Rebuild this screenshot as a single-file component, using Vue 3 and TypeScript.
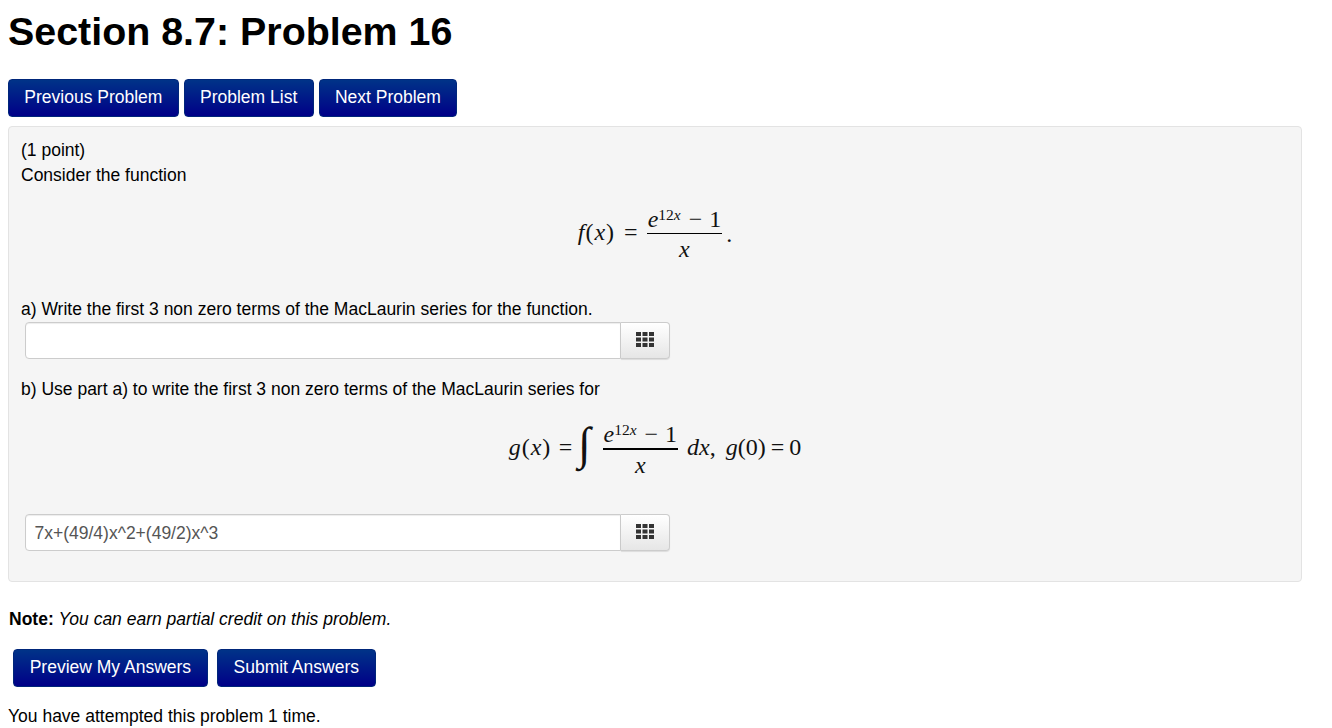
<script setup lang="ts">
const topButtons: string[] = ['Previous Problem', 'Problem List', 'Next Problem']
const bottomButtons: string[] = ['Preview My Answers', 'Submit Answers']
</script>

<template>
  <main class="page">
    <h1 class="title">Section 8.7: Problem 16</h1>
    <nav class="nav">
      <a v-for="b in topButtons" :key="b" class="btn">{{ b }}</a>
    </nav>
    <section class="well">
      <div class="line">(1 point)</div>
      <div class="line">Consider the function</div>
      <div class="math eq1">
        <i>f</i><span class="p">(</span><i>x</i><span class="p">)</span>
        <span class="eq">=</span>
        <span class="frac">
          <span class="num"><i>e</i><sup><span>12</span><i>x</i></sup><span class="minus">−</span><span>1</span></span>
          <span class="den"><i>x</i></span>
        </span>
        <span class="dot">.</span>
      </div>
      <div class="line">a) Write the first 3 non zero terms of the MacLaurin series for the function.</div>
      <div class="group">
        <div class="field"></div>
        <div class="addon">
          <svg width="18" height="15" viewBox="0 0 18 15"><path class="grid" d="M0 0h5v4H0zM6.5 0h5v4h-5zM13 0h5v4h-5zM0 5.5h5v4H0zM6.5 5.5h5v4h-5zM13 5.5h5v4h-5zM0 11h5v4H0zM6.5 11h5v4h-5zM13 11h5v4h-5z"/></svg>
        </div>
      </div>
      <div class="line b">b) Use part a) to write the first 3 non zero terms of the MacLaurin series for</div>
      <div class="math eq2">
        <i>g</i><span class="p">(</span><i>x</i><span class="p">)</span>
        <span class="eq first">=</span>
        <span class="int">∫</span>
        <span class="frac thick">
          <span class="num"><i>e</i><sup><span>12</span><i>x</i></sup><span class="minus">−</span><span>1</span></span>
          <span class="den"><i>x</i></span>
        </span>
        <span class="dx"><i>dx</i>,</span>
        <span class="g0"><i>g</i>(0)</span>
        <span class="eq tight">=</span>
        <span>0</span>
      </div>
      <div class="group">
        <div class="field">7x+(49/4)x^2+(49/2)x^3</div>
        <div class="addon">
          <svg width="18" height="15" viewBox="0 0 18 15"><path class="grid" d="M0 0h5v4H0zM6.5 0h5v4h-5zM13 0h5v4h-5zM0 5.5h5v4H0zM6.5 5.5h5v4h-5zM13 5.5h5v4h-5zM0 11h5v4H0zM6.5 11h5v4h-5zM13 11h5v4h-5z"/></svg>
        </div>
      </div>
    </section>
    <p class="note"><b>Note:</b> <i>You can earn partial credit on this problem.</i></p>
    <div class="actions">
      <a v-for="b in bottomButtons" :key="b" class="btn">{{ b }}</a>
    </div>
    <p class="attempts">You have attempted this problem 1 time.</p>
  </main>
</template>

<style scoped>
.page {
  font-family: "Liberation Sans", Arial, sans-serif;
  font-size: 17.5px;
  line-height: 25px;
  color: #000;
  width: 1294px;
  height: 728px;
  overflow: hidden;
  padding-left: 8px;
}
.title {
  margin: 0;
  padding-top: 7px;
  font-size: 39.4px;
  line-height: 48px;
  font-weight: 700;
}
.nav {
  display: flex;
  gap: 5px;
  margin-top: 24px;
}
.btn {
  display: block;
  height: 38px;
  box-sizing: border-box;
  padding: 0 15.3px;
  line-height: 35px;
  color: #fff;
  border-radius: 4px;
  background: linear-gradient(#038, #008);
  border: 1px solid #00267a;
  white-space: nowrap;
}
.well {
  margin-top: 9px;
  height: 456px;
  box-sizing: border-box;
  padding: 11px 12px 0;
  background: #f5f5f5;
  border: 1px solid #e3e3e3;
  border-radius: 4px;
}
.line { height: 25px; }
.math {
  font-family: "Liberation Serif", "DejaVu Serif", serif;
  font-size: 24px;
  line-height: 24px;
  color: #111;
  display: flex;
  justify-content: center;
  align-items: center;
}
.eq1 { height: 88px; margin-bottom: 21px; }
.p { margin: 0 1px; }
.eq { margin: 0 9px; }
.eq.first { margin: 0 7.5px; }
.eq.tight { margin: 0 5px; }
.frac {
  display: inline-flex;
  flex-direction: column;
  align-items: center;
}
.num {
  display: block;
  padding: 0 1px;
  border-bottom: 1.5px solid #000;
  height: 27px;
  line-height: 26px;
  white-space: nowrap;
}
.num sup {
  font-size: 15.5px;
  line-height: 0;
  position: relative;
  top: -7px;
  vertical-align: baseline;
}
.minus { margin: 0 7px 0 8px; }
.den { display: block; height: 24px; line-height: 30px; }
.dot { margin: 4px 0 0 4px; }
.group {
  display: flex;
  width: 645px;
  height: 37px;
  margin-left: 4px;
}
.field {
  flex: 1;
  box-sizing: border-box;
  background: #fff;
  border: 1px solid #ccc;
  border-radius: 4px 0 0 4px;
  color: #555;
  padding: 0 8.5px;
  line-height: 36px;
  box-shadow: inset 0 1px 1px rgba(0, 0, 0, .075);
}
.addon {
  width: 49px;
  box-sizing: border-box;
  display: flex;
  align-items: center;
  justify-content: center;
  padding-bottom: 2px;
  border: 1px solid #ccc;
  border-left: 0;
  border-radius: 0 4px 4px 0;
  background: linear-gradient(#fff, #e6e6e6);
  box-shadow: 0 1px 1px rgba(0, 0, 0, .1);
}
.grid { fill: #333; }
.b { margin-top: 18px; }
.eq2 { height: 88px; margin: 1px 0 23px; }
.int {
  font-size: 46px;
  line-height: 56px;
  margin: 0 12px 6px -2px;
}
.thick .num { border-bottom-width: 2px; }
.dx { margin: 0 10px 0 9px; }
.note { margin: 25px 0 0; height: 25px; padding-left: 1px; }
.actions {
  display: flex;
  gap: 9px;
  margin: 17px 0 0 5px;
}
.actions .btn { padding: 0 15.7px; }
.attempts { margin: 17px 0 0; }
</style>
